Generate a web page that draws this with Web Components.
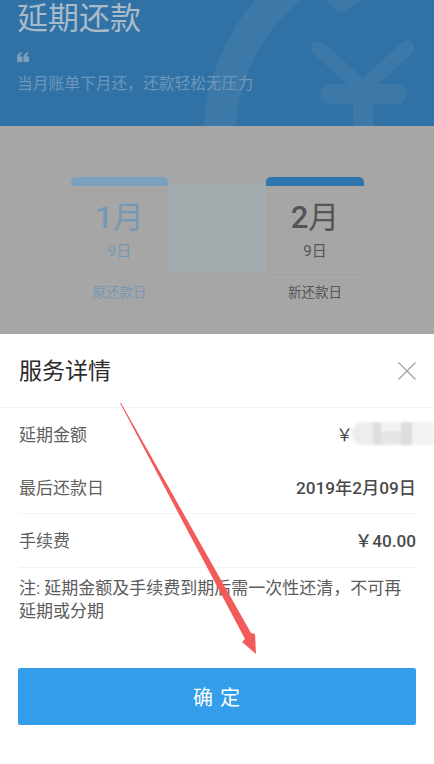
<!DOCTYPE html>
<html>
<head>
<meta charset="utf-8">
<style>
  html, body { margin: 0; padding: 0; }
  body {
    width: 434px;
    height: 764px;
    overflow: hidden;
    position: relative;
    background: #fff;
    font-family: Roboto, "Noto Sans CJK SC", sans-serif;
  }
</style>
</head>
<body>
<promo-header></promo-header>
<date-compare>
  <date-card slot="from" num="1" day="9日" label="原还款日" faded></date-card>
  <date-card slot="to" num="2" day="9日" label="新还款日"></date-card>
</date-compare>
<service-sheet>
  <detail-row label="延期金额" border="none"><masked-amount></masked-amount></detail-row>
  <detail-row label="最后还款日" strong>2019年2月09日</detail-row>
  <detail-row label="手续费" strong>￥40.00</detail-row>
</service-sheet>
<red-arrow></red-arrow>

<script>
class PromoHeader extends HTMLElement {
  constructor(){
    super()
    this.shadowDOM = this.attachShadow({mode: 'open'})
  }
  connectedCallback(){
    this.shadowDOM.innerHTML = `
      <style>
        :host {
          display: block;
          height: 126px;
          background: #3072a6;
          position: relative;
          overflow: hidden;
          box-sizing: border-box;
          padding: 0 17px;
        }
        .text { position: relative; z-index: 1; }
        h1 {
          margin: 0;
          font-size: 31px;
          line-height: 38px;
          font-weight: 400;
          color: #a9bac8;
          white-space: nowrap;
        }
        .quote {
          height: 11px;
          margin-top: 14px;
          display: block;
        }
        p {
          margin: 10px 0 0;
          font-size: 15.750px;
          line-height: 22px;
          color: #6c97ba;
          white-space: nowrap;
        }
        .yen { position: absolute; left: 0; top: 0; }
      </style>
      <svg class="yen" width="434" height="126" viewBox="0 0 434 126" fill="none" stroke="#3c79a8">
        <circle cx="417" cy="140" r="198" stroke-width="32"/>
        <path d="M332 -4 L341 5 L356 -4" stroke-width="14" stroke-linecap="round" stroke-linejoin="round"/>
        <path d="M318 48 L363 88 L407 48" stroke-width="15" stroke-linecap="round" stroke-linejoin="round"/>
        <path d="M330 94 H397" stroke-width="20" stroke-linecap="round"/>
        <path d="M363 84 V126" stroke-width="20"/>
      </svg>
      <div class="text">
        <h1>延期还款</h1>
        <svg class="quote" width="12" height="11" viewBox="0 0 13 12" fill="#7f9fb9">
          <path d="M0 11 V6.500 C0 3 2 1 5 0 L5.500 1.500 C4 2.300 3.300 3.300 3.200 5 H6 V11 Z"/>
          <path d="M7 11 V6.500 C7 3 9 1 12 0 L12.500 1.500 C11 2.300 10.300 3.300 10.200 5 H13 V11 Z"/>
        </svg>
        <p>当月账单下月还，还款轻松无压力</p>
      </div>
    `
  }
}

class DateCompare extends HTMLElement {
  constructor(){
    super()
    this.shadowDOM = this.attachShadow({mode: 'open'})
  }
  connectedCallback(){
    this.shadowDOM.innerHTML = `
      <style>
        :host {
          display: block;
          height: 208px;
          background: #a6a6a6;
          box-sizing: border-box;
          padding: 51px 70px 0 71px;
        }
        .wrap {
          display: grid;
          grid-template-columns: 97px 98px 98px;
          align-items: start;
        }
        .middle {
          height: 89px;
          margin-top: 6px;
          background: #a4abaf;
        }
      </style>
      <div class="wrap">
        <slot name="from"></slot>
        <div class="middle"></div>
        <slot name="to"></slot>
      </div>
    `
  }
}

class DateCard extends HTMLElement {
  constructor(){
    super()
    this.shadowDOM = this.attachShadow({mode: 'open'})
  }
  connectedCallback(){
    const faded = this.hasAttribute('faded')
    this.shadowDOM.innerHTML = `
      <style>
        :host {
          display: block;
          text-align: center;
          color: ${faded ? '#7498b5' : '#555'};
        }
        .bar {
          height: 9px;
          border-radius: 5px 5px 0 0;
          background: ${faded ? '#7ba1be' : '#2f76ae'};
        }
        .body {
          height: 89px;
          box-sizing: border-box;
          border-bottom: 1px solid ${faded ? 'transparent' : '#9f9f9f'};
        }
        .month {
          padding-top: 14px;
          font-size: 31px;
          line-height: 36px;
        }
        .month b { font-weight: 500; }
        .day {
          margin-top: 5px;
          font-size: 15px;
          line-height: 20px;
        }
        .label {
          margin-top: 7px;
          font-size: 13.500px;
          line-height: 20px;
        }
      </style>
      <div class="bar"></div>
      <div class="body">
        <div class="month"><b>${this.getAttribute('num')}</b>月</div>
        <div class="day">${this.getAttribute('day')}</div>
      </div>
      <div class="label">${this.getAttribute('label')}</div>
    `
  }
}

class ServiceSheet extends HTMLElement {
  constructor(){
    super()
    this.shadowDOM = this.attachShadow({mode: 'open'})
  }
  connectedCallback(){
    this.shadowDOM.innerHTML = `
      <style>
        :host {
          display: block;
          height: 430px;
          background: #fff;
          color: #5c5c5c;
        }
        header {
          height: 74px;
          box-sizing: border-box;
          border-bottom: 1px solid #f0f0f0;
          padding: 0 18px 0 19px;
          display: flex;
          align-items: center;
          justify-content: space-between;
        }
        h2 {
          margin: -4px 0 0;
          font-size: 23px;
          font-weight: 400;
          color: #2b2b2b;
        }
        .list { padding: 0 18px 0 19px; }
        .note {
          margin: 9px 30px 0 19px;
          font-size: 17px;
          line-height: 23px;
          color: #5c5c5c;
        }
        button {
          display: block;
          width: 398px;
          height: 57px;
          margin: 45px 0 0 18px;
          border: none;
          border-radius: 2px;
          background: #349eea;
          color: #fff;
          font-family: inherit;
          font-size: 20px;
          letter-spacing: 1px;
          white-space: pre;
        }
      </style>
      <header>
        <h2>服务详情</h2>
        <svg width="18" height="18" viewBox="0 0 18 18" stroke="#a3a3a3" stroke-width="1.300" fill="none">
          <path d="M0.500 0.500 L17.500 17.500 M17.500 0.500 L0.500 17.500"/>
        </svg>
      </header>
      <div class="list"><slot></slot></div>
      <div class="note">注: 延期金额及手续费到期后需一次性还清，不可再延期或分期</div>
      <button>确 定</button>
    `
  }
}

class DetailRow extends HTMLElement {
  constructor(){
    super()
    this.shadowDOM = this.attachShadow({mode: 'open'})
  }
  connectedCallback(){
    const noBorder = this.getAttribute('border') === 'none'
    this.shadowDOM.innerHTML = `
      <style>
        :host {
          display: flex;
          height: 53px;
          box-sizing: border-box;
          padding-bottom: 2px;
          align-items: center;
          justify-content: space-between;
          border-bottom: 1px solid ${noBorder ? 'transparent' : '#f2f2f2'};
          font-size: 17px;
          color: #5f5f5f;
        }
        :host(:last-child) { height: 54px; }
        .val {
          color: #4a4a4a;
          font-weight: ${this.hasAttribute('strong') ? 500 : 400};
          font-size: 17.200px;
        }
      </style>
      <span>${this.getAttribute('label')}</span>
      <span class="val"><slot></slot></span>
    `
  }
}

class MaskedAmount extends HTMLElement {
  constructor(){
    super()
    this.shadowDOM = this.attachShadow({mode: 'open'})
  }
  connectedCallback(){
    this.shadowDOM.innerHTML = `
      <style>
        :host {
          display: flex;
          align-items: center;
          margin-right: -18px;
          width: 98px;
          height: 24px;
        }
        .sign { font-size: 17px; width: 16px; flex: none; color: #4a4a4a; }
        .mask {
          flex: 1;
          height: 23px;
          display: flex;
          filter: blur(1px);
        }
        .mask i { display: block; height: 100%; }
        .a { width: 21px; background: #ededed; border-radius: 11px 0 0 11px; }
        .b { width: 8px; background: #dedede; }
        .c { width: 20px; background: linear-gradient(#f3f3f3 0 40%, #e6e6e6 40% 100%); }
        .d { width: 11px; background: #dddddd; }
        .e { width: 22px; background: #f2f2f2; }
      </style>
      <span class="sign">￥</span>
      <div class="mask"><i class="a"></i><i class="b"></i><i class="c"></i><i class="d"></i><i class="e"></i></div>
    `
  }
}

class RedArrow extends HTMLElement {
  constructor(){
    super()
    this.shadowDOM = this.attachShadow({mode: 'open'})
  }
  connectedCallback(){
    this.shadowDOM.innerHTML = `
      <style>
        :host { position: absolute; left: 0; top: 0; pointer-events: none; }
        svg { display: block; }
      </style>
      <svg width="434" height="764" viewBox="0 0 434 764">
        <path fill="#f35a5a" d="M120 403 L121 403 L251 633 L255 634 L256 654 L242 642 L245 639 Z"/>
      </svg>
    `
  }
}

customElements.define('promo-header', PromoHeader)
customElements.define('date-compare', DateCompare)
customElements.define('date-card', DateCard)
customElements.define('service-sheet', ServiceSheet)
customElements.define('detail-row', DetailRow)
customElements.define('masked-amount', MaskedAmount)
customElements.define('red-arrow', RedArrow)
</script>
</body>
</html>
